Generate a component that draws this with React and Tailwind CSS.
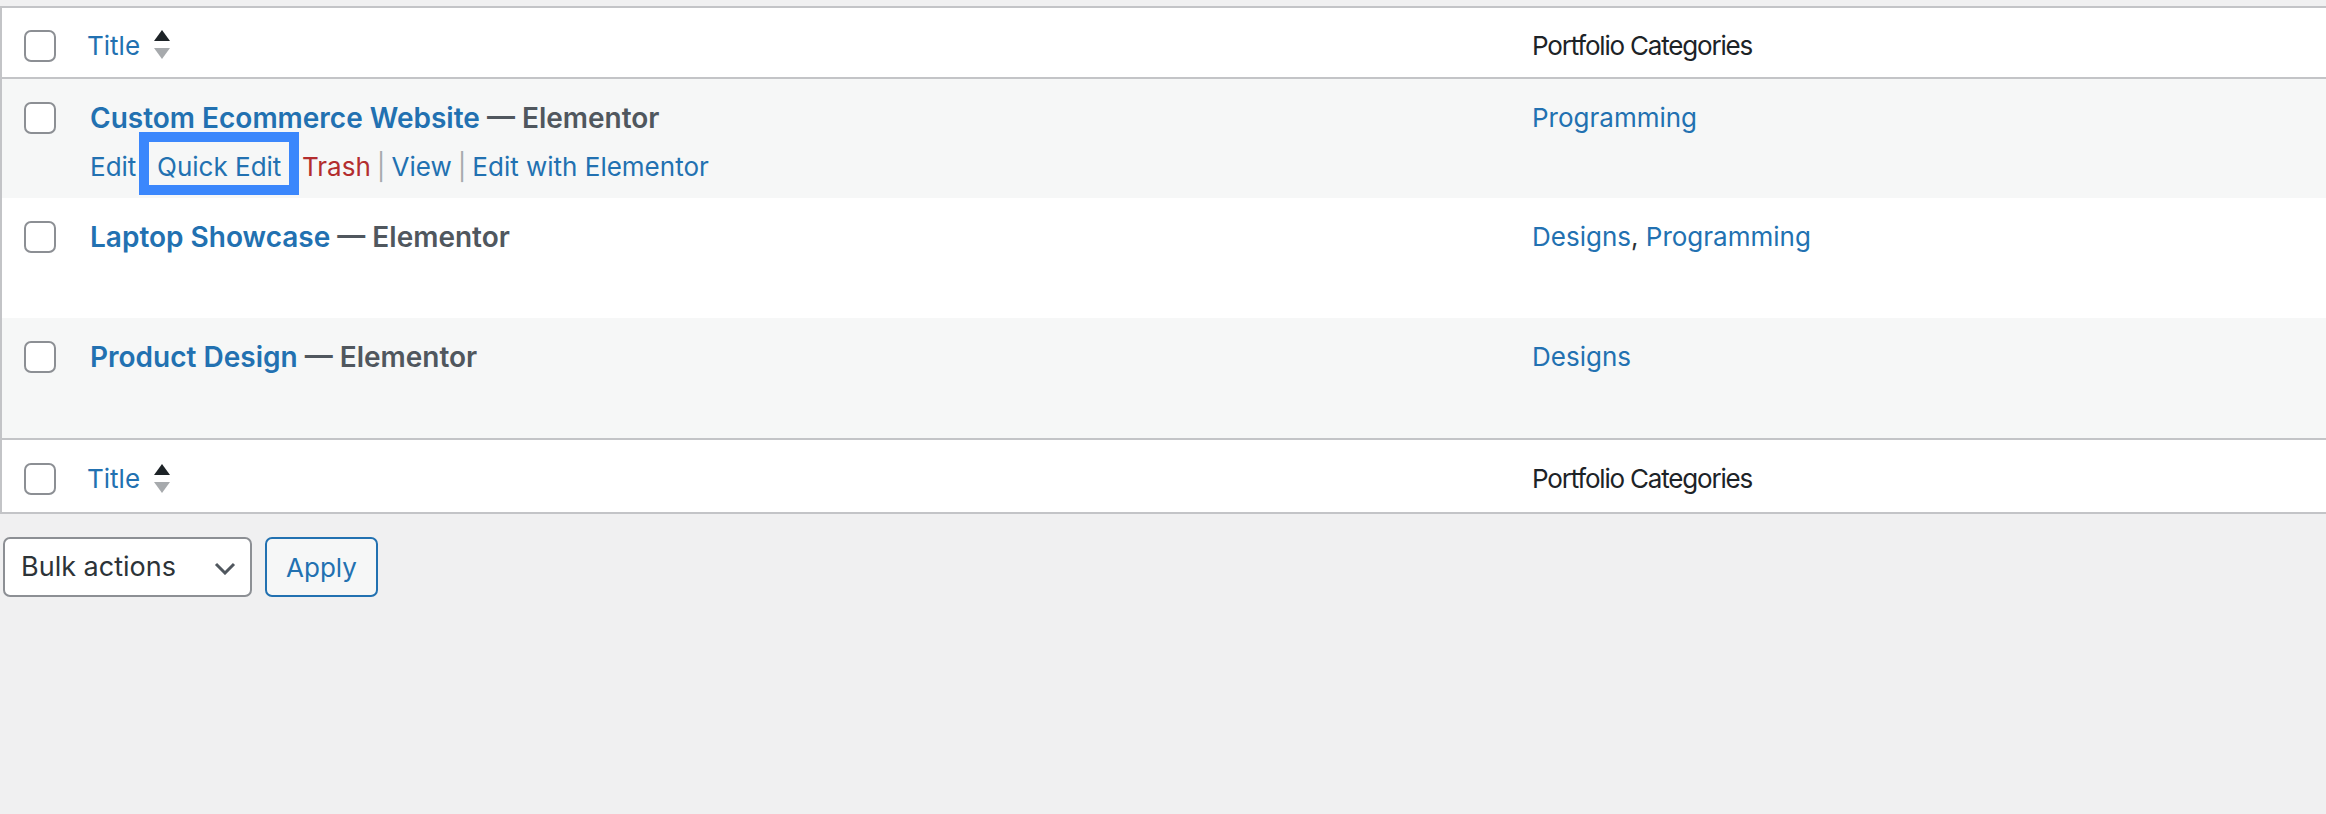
import React from 'react';

const rows = [
  {
    title: 'Custom Ecommerce Website',
    cats: ['Programming'],
    bg: 'bg-[#f6f7f7]',
    h: 'h-[119px]',
    actions: true,
  },
  {
    title: 'Laptop Showcase',
    cats: ['Designs', 'Programming'],
    bg: 'bg-white',
    h: 'h-[120px]',
  },
  {
    title: 'Product Design',
    cats: ['Designs'],
    bg: 'bg-[#f6f7f7]',
    h: 'h-[120px]',
  },
];

const Checkbox = ({ className = '' }) => (
  <span
    className={`block w-[32px] h-[32px] rounded-[7px] border-2 border-[#8c8f94] bg-white ${className}`}
  />
);

const SortArrows = () => (
  <svg width="16" height="29" viewBox="0 0 16 29" className="ml-[14px] mt-[-2px]">
    <polygon points="8,0 16,11 0,11" fill="#1d2327" />
    <polygon points="0,18 16,18 8,29" fill="#a7aaad" />
  </svg>
);

const HeadRow = () => (
  <div className="flex items-center bg-white">
    <div className="w-[85px] pl-[22px]">
      <Checkbox className="mt-[6px]" />
    </div>
    <div className="w-[1445px] pt-[6px] flex items-center">
      <span className="text-[26px] leading-[38px] text-[#2271b1]">Title</span>
      <SortArrows />
    </div>
    <div className="flex-1 pt-[6px] text-[26px] leading-[38px] tracking-[-1.2px] text-[#1d2327]">
      Portfolio Categories
    </div>
  </div>
);

const Sep = () => <span className="mx-[6px] text-[#a7aaad]">|</span>;

export default function App() {
  return (
    <div className="min-h-screen bg-[#f0f0f1] pt-[6px] font-['Inter',sans-serif] overflow-hidden">
      <div className="border-l-2 border-t-2 border-b-2 border-[#c3c4c7] bg-white">
        {/* header */}
        <div className="h-[71px] flex flex-col justify-center border-b-2 border-[#c3c4c7]">
          <HeadRow />
        </div>

        {/* rows */}
        {rows.map((r) => (
          <div key={r.title} className={`flex items-start ${r.h} ${r.bg}`}>
            <div className="w-[85px] pl-[22px] pt-[23px]">
              <Checkbox />
            </div>
            <div className="w-[1445px] pl-[3px] pt-[19px]">
              <div className="text-[28px] leading-[40px] font-semibold">
                <span className="text-[#2271b1]">{r.title}</span>
                <span className="text-[#50575e]"> — Elementor</span>
              </div>
              {r.actions && (
                <div className="mt-[10px] text-[26px] leading-[38px] whitespace-pre">
                  <span className="text-[#2271b1]">Edit</span>
                  <Sep />
                  <span className="relative text-[#2271b1]">
                    Quick Edit
                    <span className="absolute left-[-18px] right-[-18px] top-[-19px] bottom-[-13px] border-[10px] border-[#3b87fc]" />
                  </span>
                  <Sep />
                  <span className="text-[#b32d2e]">Trash</span>
                  <Sep />
                  <span className="text-[#2271b1]">View</span>
                  <Sep />
                  <span className="text-[#2271b1]">Edit with Elementor</span>
                </div>
              )}
            </div>
            <div className="flex-1 pt-[19px] text-[26px] leading-[40px] text-[#2271b1]">
              {r.cats.map((c, i) => (
                <React.Fragment key={c}>
                  {i > 0 && <span className="text-[#2c3338]">, </span>}
                  <span>{c}</span>
                </React.Fragment>
              ))}
            </div>
          </div>
        ))}

        {/* footer */}
        <div className="h-[74px] flex flex-col justify-center border-t-2 border-[#c3c4c7]">
          <HeadRow />
        </div>
      </div>

      {/* bulk actions */}
      <div className="mt-[23px] ml-[3px] flex items-center gap-[13px]">
        <div className="w-[249px] h-[60px] rounded-[7px] border-2 border-[#8c8f94] bg-white flex items-center justify-between pl-[16px] pr-[14px]">
          <span className="text-[27px] text-[#2c3338]">Bulk actions</span>
          <svg width="22" height="13" viewBox="0 0 22 13" className="mt-[2px]">
            <polyline points="2,2 11,11 20,2" fill="none" stroke="#50575e" strokeWidth="3" />
          </svg>
        </div>
        <div className="w-[113px] h-[60px] rounded-[7px] border-2 border-[#2271b1] bg-[#f6f7f7] flex items-center justify-center">
          <span className="text-[26px] text-[#2271b1]">Apply</span>
        </div>
      </div>
    </div>
  );
}
